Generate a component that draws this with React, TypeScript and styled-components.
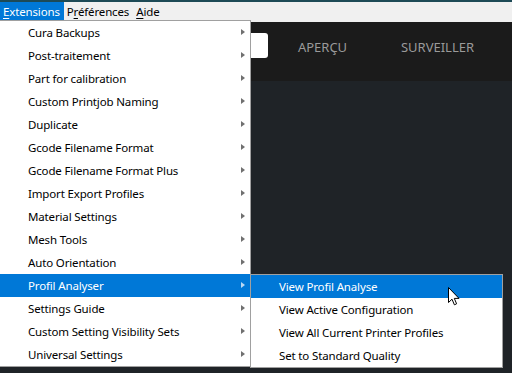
import styled, { createGlobalStyle } from "styled-components";

const HIGHLIGHT = "#0078d7";
const MENU_BORDER = "#a0a0a0";

const mainItems = [
  "Cura Backups",
  "Post-traitement",
  "Part for calibration",
  "Custom Printjob Naming",
  "Duplicate",
  "Gcode Filename Format",
  "Gcode Filename Format Plus",
  "Import Export Profiles",
  "Material Settings",
  "Mesh Tools",
  "Auto Orientation",
  "Profil Analyser",
  "Settings Guide",
  "Custom Setting Visibility Sets",
  "Universal Settings",
];

const subItems = [
  "View Profil Analyse",
  "View Active Configuration",
  "View All Current Printer Profiles",
  "Set to Standard Quality",
];

const GlobalStyle = createGlobalStyle`
  html, body {
    margin: 0;
    padding: 0;
    background: #1f2327;
  }
  * {
    box-sizing: border-box;
  }
`;

const Window = styled.div`
  width: 512px;
  height: 373px;
  display: flex;
  flex-direction: column;
  overflow: hidden;
  font-family: "Noto Sans", "Open Sans", sans-serif;
  font-size: 11.5px;
  letter-spacing: -0.15px;
`;

const TitleEdge = styled.div`
  height: 2px;
  background: #1d4a56;
`;

const MenuBar = styled.div`
  height: 20px;
  display: flex;
  align-items: stretch;
  background: #f0f0f0;
  color: #000;
`;

const MenuTitle = styled.div<{ $open?: boolean }>`
  display: flex;
  align-items: center;
  padding: 0 4px 1px 3px;
  background: ${({ $open }) => ($open ? HIGHLIGHT : "transparent")};
  color: ${({ $open }) => ($open ? "#fff" : "#000")};

  u {
    text-decoration-thickness: 1px;
    text-underline-offset: 2px;
  }
`;

const Workspace = styled.div`
  position: relative;
  flex: 1;
  display: flex;
  flex-direction: column;
  background: #1f2327;
`;

const Header = styled.div`
  height: 59px;
  display: flex;
  align-items: flex-start;
  background: #1b1b1b;
`;

const PrepareButton = styled.div`
  width: 100px;
  height: 25px;
  margin: 11px 0 0 168px;
  border-radius: 3px;
  background: #fff;
`;

const Tab = styled.div`
  width: 115px;
  margin-top: 16px;
  text-align: center;
  color: #9a9a9a;
  font-size: 13px;
  letter-spacing: 0;
`;

const Tabs = styled.div`
  display: flex;
  margin-left: -3px;
`;

const Menu = styled.div<{ $left: number; $top: number; $width: number }>`
  position: absolute;
  left: ${({ $left }) => $left}px;
  top: ${({ $top }) => $top}px;
  width: ${({ $width }) => $width}px;
  display: flex;
  flex-direction: column;
  background: #fff;
  border: 1px solid ${MENU_BORDER};
  z-index: 2;
`;

const MenuRow = styled.div<{ $active?: boolean; $indent: number }>`
  position: relative;
  height: 23px;
  display: flex;
  align-items: center;
  justify-content: space-between;
  padding: 0 5px 1px ${({ $indent }) => $indent}px;
  background: ${({ $active }) => ($active ? HIGHLIGHT : "transparent")};
  color: ${({ $active }) => ($active ? "#fff" : "#000")};
  white-space: nowrap;
`;

const SubArrow = styled.span<{ $active?: boolean }>`
  width: 0;
  height: 0;
  border-top: 3.5px solid transparent;
  border-bottom: 3.5px solid transparent;
  border-left: 4px solid ${({ $active }) => ($active ? "#b9d8f2" : "#707070")};
`;

const Cursor = styled.svg`
  position: absolute;
  left: 448px;
  top: 265px;
  z-index: 3;
`;

export default function App() {
  return (
    <Window>
      <GlobalStyle />
      <TitleEdge />
      <MenuBar>
        <MenuTitle $open>
          <span><u>E</u>xtensions</span>
        </MenuTitle>
        <MenuTitle>
          <span>P<u>r</u>éférences</span>
        </MenuTitle>
        <MenuTitle>
          <span><u>A</u>ide</span>
        </MenuTitle>
      </MenuBar>
      <Workspace>
        <Header>
          <PrepareButton />
          <Tabs>
            <Tab>APERÇU</Tab>
            <Tab>SURVEILLER</Tab>
          </Tabs>
        </Header>

        <Menu $left={-1} $top={-2} $width={252}>
          {mainItems.map((label) => {
            const active = label === "Profil Analyser";
            return (
              <MenuRow key={label} $active={active} $indent={28}>
                <span>{label}</span>
                <SubArrow $active={active} />
              </MenuRow>
            );
          })}
        </Menu>

        <Menu $left={250} $top={252} $width={253}>
          {subItems.map((label, i) => (
            <MenuRow key={label} $active={i === 0} $indent={28}>
              <span>{label}</span>
            </MenuRow>
          ))}
        </Menu>

        <Cursor width="12" height="19" viewBox="0 0 12 19" aria-hidden="true">
          <path
            d="M0.5 0.5 L0.5 15.5 L4 12.2 L6.4 17.8 L8.6 16.8 L6.3 11.4 L11 11.4 Z"
            fill="#fff"
            stroke="#000"
            strokeWidth="1"
            strokeLinejoin="miter"
          />
        </Cursor>
      </Workspace>
    </Window>
  );
}
